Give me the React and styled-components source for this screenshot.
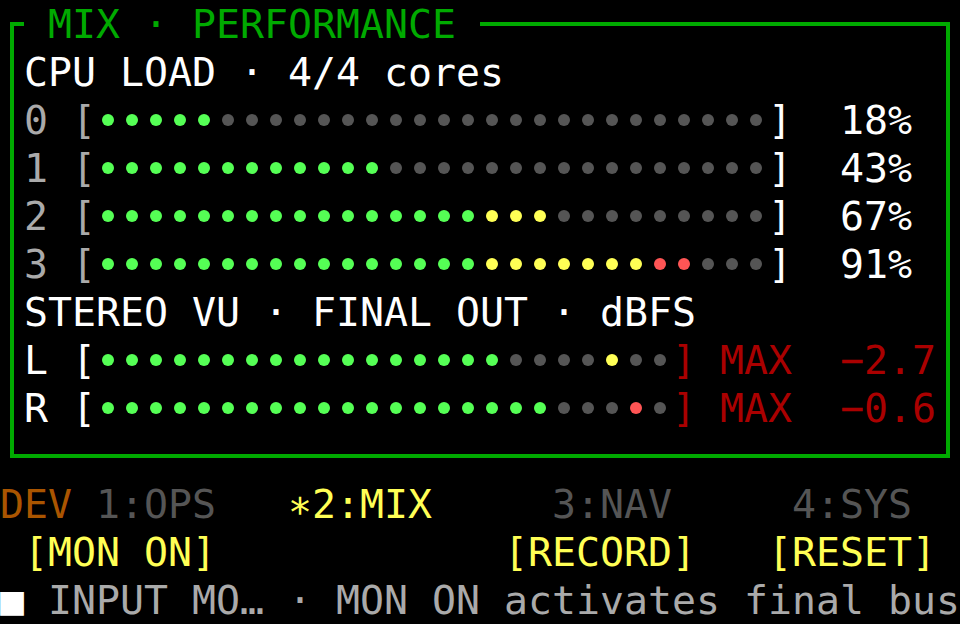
import React from 'react';
import styled, { createGlobalStyle } from 'styled-components';

const CELL = 24;

const GlobalStyle = createGlobalStyle`
  html, body {
    margin: 0;
    padding: 0;
    background: #000;
  }
`;

const Screen = styled.div`
  width: 960px;
  height: 624px;
  overflow: hidden;
  background: #000;
  color: #fff;
  font-family: "DejaVu Sans Mono", monospace;
  font-size: 39.86px;
  line-height: 48px;
  white-space: pre;
`;

const Frame = styled.div`
  margin: 0 0 22px 10px;
  width: 940px;
`;

const FrameTop = styled.div`
  display: flex;
  height: 48px;
`;

const Corner = styled.div`
  box-sizing: border-box;
  width: 14px;
  height: 26px;
  align-self: flex-end;
  border-top: 4px solid #00aa00;
  border-left: 4px solid #00aa00;
`;

const Title = styled.span`
  color: #00aa00;
`;

const TopLine = styled.div`
  box-sizing: border-box;
  flex: 1;
  height: 26px;
  align-self: flex-end;
  border-top: 4px solid #00aa00;
  border-right: 4px solid #00aa00;
`;

const FrameBody = styled.div`
  border: 4px solid #00aa00;
  border-top: none;
  padding: 0 0 22px 10px;
`;

const Row = styled.div`
  display: flex;
  align-items: center;
  height: 48px;
`;

const Txt = styled.span`
  color: ${p => p.$color || '#fff'};
  margin-left: ${p => (p.$at || 0) * CELL}px;
`;

const Dots = styled.span`
  display: flex;
`;

const DotCell = styled.span`
  display: flex;
  align-items: center;
  justify-content: center;
  width: ${CELL}px;
  height: 48px;
`;

const Dot = styled.span`
  width: 12px;
  height: 12px;
  border-radius: 50%;
  background: ${p => p.$color};
`;

const C = {
  green: '#55ff55',
  yellow: '#ffff55',
  red: '#ff5555',
  off: '#555555',
  gray: '#aaaaaa',
  dim: '#555555',
  amber: '#aa5500',
  hot: '#ffff55',
  max: '#aa0000',
};

function cpuColor(i, lit) {
  if (i >= lit) return C.off;
  if (i < 16) return C.green;
  if (i < 23) return C.yellow;
  return C.red;
}

function Bar({ colors }) {
  return (
    <Dots>
      {colors.map((c, i) => (
        <DotCell key={i}>
          <Dot $color={c} />
        </DotCell>
      ))}
    </Dots>
  );
}

const cores = [
  { id: 0, lit: 5, pct: '18%' },
  { id: 1, lit: 12, pct: '43%' },
  { id: 2, lit: 19, pct: '67%' },
  { id: 3, lit: 25, pct: '91%' },
];

function vu(lit, peak, peakColor) {
  return Array.from({ length: 24 }, (_, i) => {
    if (i === peak) return peakColor;
    return i < lit ? C.green : C.off;
  });
}

const channels = [
  { name: 'L', colors: vu(17, 21, C.yellow), max: '−2.7' },
  { name: 'R', colors: vu(19, 22, C.red), max: '−0.6' },
];

export default function App() {
  return (
    <Screen>
      <GlobalStyle />
      <Frame>
        <FrameTop>
          <Corner />
          <Title>{' MIX · PERFORMANCE '}</Title>
          <TopLine />
        </FrameTop>
        <FrameBody>
          <Row>
            <Txt>CPU LOAD · 4/4 cores</Txt>
          </Row>
          {cores.map(c => (
            <Row key={c.id}>
              <Txt $color={C.gray}>{`${c.id} [`}</Txt>
              <Bar colors={Array.from({ length: 28 }, (_, i) => cpuColor(i, c.lit))} />
              <Txt>]</Txt>
              <Txt $at={2}>{c.pct}</Txt>
            </Row>
          ))}
          <Row>
            <Txt>STEREO VU · FINAL OUT · dBFS</Txt>
          </Row>
          {channels.map(ch => (
            <Row key={ch.name}>
              <Txt>{`${ch.name} [`}</Txt>
              <Bar colors={ch.colors} />
              <Txt $color={C.max}>{`] MAX  ${ch.max}`}</Txt>
            </Row>
          ))}
        </FrameBody>
      </Frame>
      <Row>
        <Txt $color={C.amber}>DEV</Txt>
        <Txt $color={C.dim} $at={1}>1:OPS</Txt>
        <Txt $color={C.hot} $at={3}>∗2:MIX</Txt>
        <Txt $color={C.dim} $at={5}>3:NAV</Txt>
        <Txt $color={C.dim} $at={5}>4:SYS</Txt>
      </Row>
      <Row>
        <Txt $color={C.hot} $at={1}>[MON ON]</Txt>
        <Txt $color={C.hot} $at={12}>[RECORD]</Txt>
        <Txt $color={C.hot} $at={3}>[RESET]</Txt>
      </Row>
      <Row>
        <Txt>■</Txt>
        <Txt $color={C.gray} $at={1}>INPUT MO… · MON ON activates final bus</Txt>
      </Row>
    </Screen>
  );
}
